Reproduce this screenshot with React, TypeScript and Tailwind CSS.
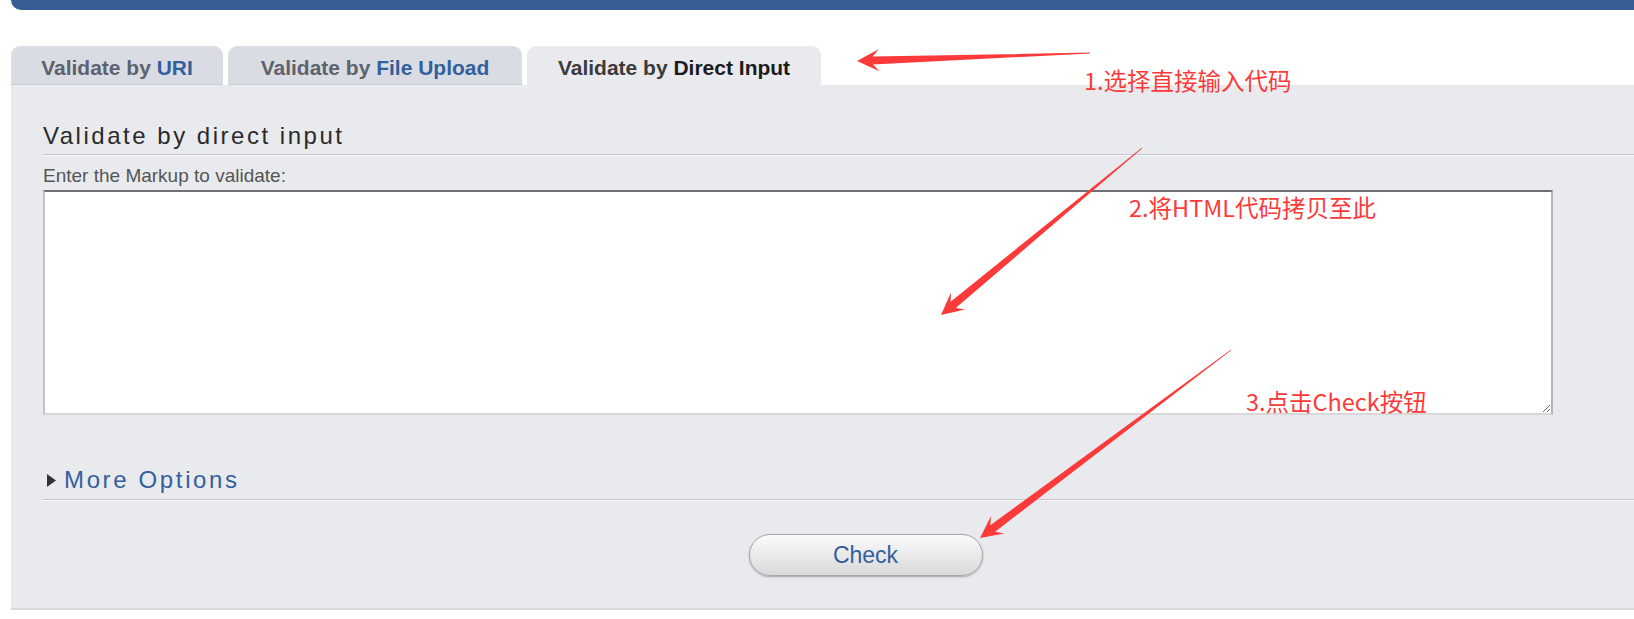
import React from "react";

const BLUE = "#335f9c";

type Pt = [number, number];

// tapered annotation arrow, tail is thin, head is a swept triangle
const arrowPoints = (tail: Pt, tip: Pt, headLen = 22, headHalf = 11, shaftHalf = 4) => {
  const dx = tip[0] - tail[0];
  const dy = tip[1] - tail[1];
  const len = Math.hypot(dx, dy);
  const ux = dx / len;
  const uy = dy / len;
  const nx = -uy;
  const ny = ux;
  const base: Pt = [tip[0] - ux * headLen, tip[1] - uy * headLen];
  const neck: Pt = [tip[0] - ux * headLen * 0.72, tip[1] - uy * headLen * 0.72];
  const pts: Pt[] = [
    [tail[0] + nx * 0.4, tail[1] + ny * 0.4],
    [neck[0] + nx * shaftHalf, neck[1] + ny * shaftHalf],
    [base[0] + nx * headHalf, base[1] + ny * headHalf],
    tip,
    [base[0] - nx * headHalf, base[1] - ny * headHalf],
    [neck[0] - nx * shaftHalf, neck[1] - ny * shaftHalf],
    [tail[0] - nx * 0.4, tail[1] - ny * 0.4],
  ];
  return pts.map((p) => `${p[0].toFixed(1)},${p[1].toFixed(1)}`).join(" ");
};

const arrows: { tail: Pt; tip: Pt }[] = [
  { tail: [1090, 53], tip: [857, 61] },
  { tail: [1142, 148], tip: [941, 315] },
  { tail: [1231, 350], tip: [980, 538] },
];

const notes = [
  { text: "1.选择直接输入代码", cls: "left-[1084px] top-[68px]" },
  { text: "2.将HTML代码拷贝至此", cls: "left-[1129px] top-[195px]" },
  { text: "3.点击Check按钮", cls: "left-[1246px] top-[389px]" },
];

const Tab = ({ label, strong, active, width }: { label: string; strong: string; active?: boolean; width: string }) => (
  <div
    className={`${width} h-[39px] pt-[5px] flex items-center justify-center rounded-t-[9px] text-[21px] font-bold ${
      active ? "bg-[#e9eaee] text-[#3b3b3b]" : "bg-[#d9dce3] text-[#5d626d] border-b border-[#c9ccd4]"
    }`}
  >
    <span>
      {label} <span className={active ? "text-[#1c1c1c]" : "text-[#335f9c]"}>{strong}</span>
    </span>
  </div>
);

export default function App() {
  return (
    <div
      className="relative w-[1634px] h-[619px] overflow-hidden bg-white"
      style={{ fontFamily: '"Liberation Sans", Arial, sans-serif' }}
    >
      <div className="w-[1720px] pl-[11px]">
        <div className="h-[10px] bg-[#365d96] rounded-bl-[10px]" />

        <div className="mt-[36px] flex gap-[5px]">
          <Tab label="Validate by" strong="URI" width="w-[212px]" />
          <Tab label="Validate by" strong="File Upload" width="w-[294px]" />
          <Tab label="Validate by" strong="Direct Input" width="w-[294px]" active />
        </div>

        <div className="bg-[#e9eaee] border-b-2 border-[#d9dadf] px-[32px] pt-[37px] pb-[32px]">
          <h2 className="text-[24px] leading-[28px] tracking-[0.105em] text-[#2a2a2a] pb-[4px] border-b border-[#c6c7cc] shadow-[0_1px_0_#f6f6f8]">
            Validate by direct input
          </h2>
          <label className="block mt-[10px] text-[19px] leading-[22px] text-[#555]">
            Enter the Markup to validate:
          </label>
          <textarea
            className="block mt-[3px] w-[1510px] h-[225px] bg-white border-2 border-t-[#707070] border-l-[#c4c4c4] border-r-[#b5b5b5] border-b-[#d8d8d8] outline-none"
          />

          <div className="mt-[51px] flex items-center gap-[8px] pl-[4px] pb-[5px] border-b border-[#c6c7cc] shadow-[0_1px_0_#f6f6f8]">
            <svg width="9" height="13" viewBox="0 0 9 13">
              <polygon points="0,0 9,6.5 0,13" fill="#333" />
            </svg>
            <span className="text-[24px] leading-[28px] tracking-[0.11em] text-[#335f9c]">More Options</span>
          </div>

          <div className="mt-[34px] flex justify-center">
            <button className="w-[234px] h-[42px] rounded-full border border-[#a8a8a8] bg-gradient-to-b from-[#fbfbfb] to-[#d9d9db] shadow-[0_1px_2px_rgba(0,0,0,0.3)] text-[23px]" style={{ color: BLUE }}>
              Check
            </button>
          </div>
        </div>
      </div>

      <svg className="absolute inset-0 pointer-events-none" width="1634" height="619">
        {arrows.map((a, i) => (
          <polygon key={i} points={arrowPoints(a.tail, a.tip)} fill="#fc3a3a" />
        ))}
      </svg>

      {notes.map((n) => (
        <span
          key={n.text}
          className={`absolute ${n.cls} text-[23.5px] leading-[24px] text-[#fc3a3a] whitespace-nowrap`}
          style={{ fontFamily: '"Noto Sans CJK SC", "Noto Sans", sans-serif' }}
        >
          {n.text}
        </span>
      ))}
    </div>
  );
}
